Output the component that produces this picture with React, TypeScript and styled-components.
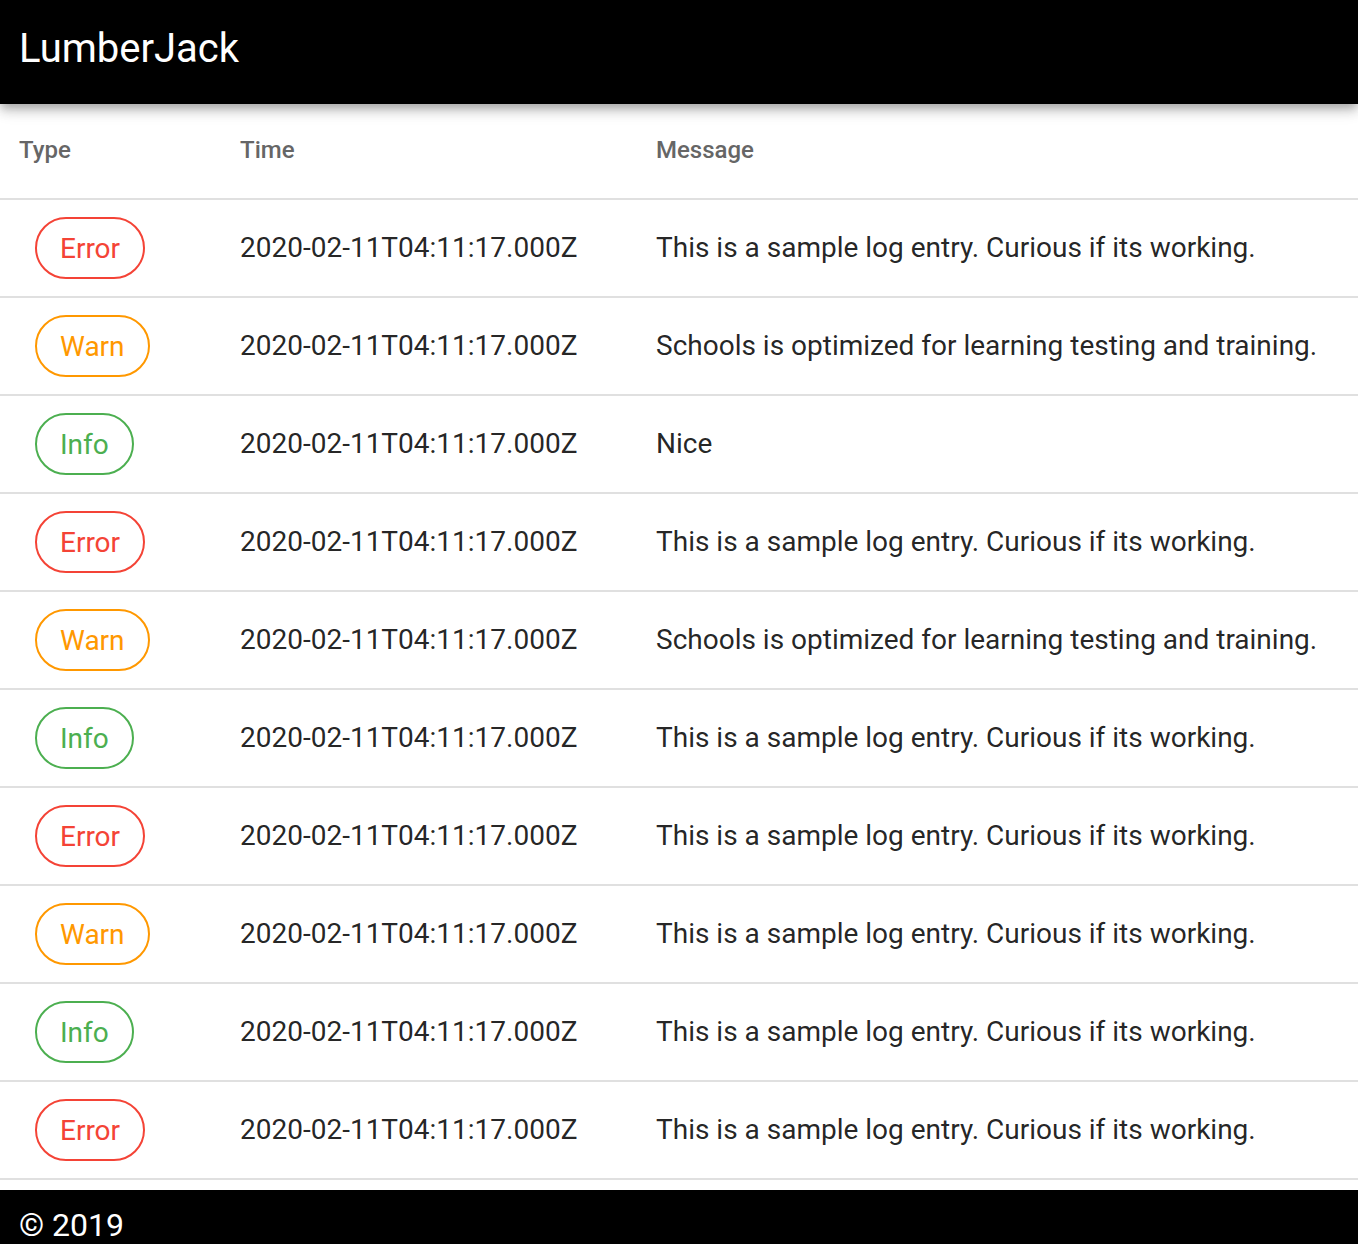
import React from "react";
import styled, { createGlobalStyle } from "styled-components";

type Level = "Error" | "Warn" | "Info";

interface ILogEntry {
  type: Level;
  time: string;
  message: string;
}

const levelColors: Record<Level, string> = {
  Error: "#f44336",
  Warn: "#ff9800",
  Info: "#4caf50",
};

const SAMPLE = "This is a sample log entry. Curious if its working.";
const SCHOOLS = "Schools is optimized for learning testing and training.";
const TIME = "2020-02-11T04:11:17.000Z";

const entries: ILogEntry[] = [
  { type: "Error", time: TIME, message: SAMPLE },
  { type: "Warn", time: TIME, message: SCHOOLS },
  { type: "Info", time: TIME, message: "Nice" },
  { type: "Error", time: TIME, message: SAMPLE },
  { type: "Warn", time: TIME, message: SCHOOLS },
  { type: "Info", time: TIME, message: SAMPLE },
  { type: "Error", time: TIME, message: SAMPLE },
  { type: "Warn", time: TIME, message: SAMPLE },
  { type: "Info", time: TIME, message: SAMPLE },
  { type: "Error", time: TIME, message: SAMPLE },
];

const GlobalStyle = createGlobalStyle`
  body {
    margin: 0;
    background: #fff;
    font-family: Roboto, "Liberation Sans", Arial, sans-serif;
  }
`;

export default function App() {
  return (
    <>
      <GlobalStyle />
      <AppBar>
        <Title>LumberJack</Title>
      </AppBar>
      <Table>
        <HeadRow>
          <HeadCell>Type</HeadCell>
          <HeadCell>Time</HeadCell>
          <HeadCell>Message</HeadCell>
        </HeadRow>
        {entries.map((entry, i) => (
          <BodyRow key={i}>
            <BodyCell>
              <Chip color={levelColors[entry.type]}>{entry.type}</Chip>
            </BodyCell>
            <TextCell>{entry.time}</TextCell>
            <TextCell>{entry.message}</TextCell>
          </BodyRow>
        ))}
      </Table>
      <Footer>© 2019</Footer>
    </>
  );
}

const AppBar = styled.header`
  position: relative;
  z-index: 1;
  height: 104px;
  box-sizing: border-box;
  padding: 25px 19px 0;
  background: #000;
  color: #fff;
  box-shadow: 0 4px 8px -2px rgba(0, 0, 0, 0.2), 0 8px 10px 0 rgba(0, 0, 0, 0.14),
    0 2px 20px 0 rgba(0, 0, 0, 0.12);
`;

const Title = styled.h1`
  margin: 0;
  font-size: 40px;
  font-weight: 400;
  line-height: normal;
`;

const Table = styled.div`
  display: flex;
  flex-direction: column;
  margin-bottom: 10px;
`;

const HeadRow = styled.div`
  display: grid;
  grid-template-columns: 221px 416px 1fr;
  box-sizing: border-box;
  height: 96px;
  border-bottom: 2px solid #e0e0e0;
`;

const BodyRow = styled(HeadRow)`
  height: 98px;
`;

const HeadCell = styled.div`
  display: flex;
  align-items: center;
  padding: 0 0 2px 19px;
  font-size: 24px;
  font-weight: 500;
  color: #666;
`;

const BodyCell = styled.div`
  display: flex;
  align-items: center;
  padding-left: 19px;
  font-size: 28px;
  color: rgba(0, 0, 0, 0.87);
  white-space: nowrap;
`;

const TextCell = styled(BodyCell)`
  padding-bottom: 2px;
`;

const Chip = styled.span<{ color: string }>`
  display: inline-flex;
  align-items: center;
  height: 62px;
  box-sizing: border-box;
  margin-left: 16px;
  padding: 0 23px;
  border: 2px solid ${(p) => p.color};
  border-radius: 32px;
  color: ${(p) => p.color};
  font-size: 28px;
`;

const Footer = styled.footer`
  background: #000;
  color: #fff;
  padding: 16px 19px 24px;
  font-size: 32px;
  line-height: normal;
`;
